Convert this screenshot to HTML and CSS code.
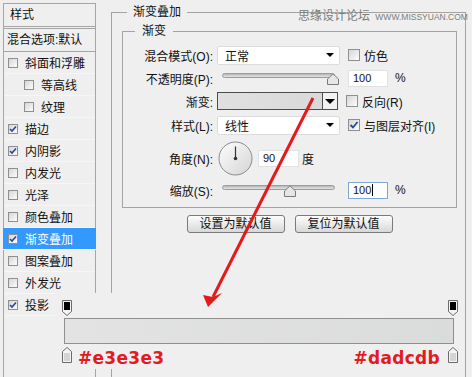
FILE: index.html
```html
<!DOCTYPE html>
<html lang="zh-CN">
<head>
    <meta charset="UTF-8">
    <title>渐变叠加</title>
    <link rel="stylesheet" href="styles.css">
</head>
<body>

<div class="dialog">
    <div class="sidebar">
        <div class="side-head">样式</div>
        <div class="side-blend">混合选项:默认</div>
        <ul class="fx-list">
            <li><span class="cb"></span>斜面和浮雕</li>
            <li class="sub"><span class="cb"></span>等高线</li>
            <li class="sub"><span class="cb"></span>纹理</li>
            <li><span class="cb"><svg width="8" height="8" viewBox="0 0 8 8"><path d="M1 4 L3 6 L7 1.5" fill="none" stroke="#27469c" stroke-width="1.6"/></svg></span>描边</li>
            <li><span class="cb"><svg width="8" height="8" viewBox="0 0 8 8"><path d="M1 4 L3 6 L7 1.5" fill="none" stroke="#27469c" stroke-width="1.6"/></svg></span>内阴影</li>
            <li><span class="cb"></span>内发光</li>
            <li><span class="cb"></span>光泽</li>
            <li><span class="cb"></span>颜色叠加</li>
            <li class="active"><span class="cb"><svg width="8" height="8" viewBox="0 0 8 8"><path d="M1 4 L3 6 L7 1.5" fill="none" stroke="#27469c" stroke-width="1.6"/></svg></span>渐变叠加</li>
            <li><span class="cb"></span>图案叠加</li>
            <li><span class="cb"></span>外发光</li>
            <li><span class="cb"><svg width="8" height="8" viewBox="0 0 8 8"><path d="M1 4 L3 6 L7 1.5" fill="none" stroke="#27469c" stroke-width="1.6"/></svg></span>投影</li>
        </ul>
    </div>

    <fieldset class="group outer">
        <legend>渐变叠加</legend>
        <fieldset class="group inner">
            <legend>渐变</legend>

            <div class="row">
                <label class="lbl">混合模式(O):</label>
                <div class="select"><span>正常</span><i class="tri"></i></div>
                <div class="extra"><span class="cb big"></span>仿色</div>
            </div>

            <div class="row">
                <label class="lbl">不透明度(P):</label>
                <div class="slider">
                    <div class="track"></div>
                    <svg class="thumb" style="left: 110px" width="12" height="12" viewBox="0 0 12 12"><path d="M0.5 11.5V6L6 0.8L11.5 6V11.5Z" fill="#e6e6e6" stroke="#7a7a7a"/></svg>
                </div>
                <div class="extra"><div class="field">100</div><span class="pct">%</span></div>
            </div>

            <div class="row r-grad">
                <label class="lbl">渐变:</label>
                <div class="grad-pick"><div class="grad-fill"></div><div class="grad-btn"><i class="tri"></i></div></div>
                <div class="extra"><span class="cb big"></span>反向(R)</div>
            </div>

            <div class="row r-style">
                <label class="lbl">样式(L):</label>
                <div class="select"><span>线性</span><i class="tri"></i></div>
                <div class="extra"><span class="cb big"><svg width="10" height="10" viewBox="0 0 10 10"><path d="M1.5 5 L4 7.5 L8.5 2" fill="none" stroke="#27469c" stroke-width="1.8"/></svg></span>与图层对齐(I)</div>
            </div>

            <div class="row r-angle">
                <label class="lbl">角度(N):</label>
                <div class="angle">
                    <svg width="35" height="35" viewBox="0 0 35 35">
                        <defs>
                            <linearGradient id="dial" x1="0" y1="0" x2="1" y2="1">
                                <stop offset="0" stop-color="#fefefe"/>
                                <stop offset="1" stop-color="#d4d4d4"/>
                            </linearGradient>
                        </defs>
                        <circle cx="17.5" cy="17.5" r="16.5" fill="url(#dial)" stroke="#8a8a8a"/>
                        <line x1="17.5" y1="17.5" x2="17.5" y2="5.5" stroke="#333" stroke-width="1.2"/>
                        <circle cx="17.5" cy="17.5" r="1.8" fill="#333"/>
                    </svg>
                    <div class="field deg">90</div>
                    <span class="unit">度</span>
                </div>
            </div>

            <div class="row">
                <label class="lbl">缩放(S):</label>
                <div class="slider">
                    <div class="track"></div>
                    <svg class="thumb" style="left: 67px" width="12" height="12" viewBox="0 0 12 12"><path d="M0.5 11.5V6L6 0.8L11.5 6V11.5Z" fill="#e6e6e6" stroke="#7a7a7a"/></svg>
                </div>
                <div class="extra"><div class="field focus">100<span class="caret"></span></div><span class="pct">%</span></div>
            </div>
        </fieldset>

        <div class="buttons">
            <button class="btn">设置为默认值</button>
            <button class="btn">复位为默认值</button>
        </div>
    </fieldset>
</div>

<div class="watermark">思缘设计论坛 <span>WWW.MISSYUAN.COM</span></div>

<!-- 渐变条和色标 -->
<div class="grad-editor">
    <div class="stops">
        <svg width="10" height="16" viewBox="0 0 10 16"><path d="M0.5 0.5H9.5V11.5L5 15.5L0.5 11.5Z" fill="#f4f4f4" stroke="#6a6a6a"/><rect x="2" y="2" width="6" height="8" fill="#000"/></svg>
        <svg width="10" height="16" viewBox="0 0 10 16"><path d="M0.5 0.5H9.5V11.5L5 15.5L0.5 11.5Z" fill="#f4f4f4" stroke="#6a6a6a"/><rect x="2" y="2" width="6" height="8" fill="#000"/></svg>
    </div>
    <div class="bar"></div>
    <div class="stops bottom">
        <svg width="10" height="16" viewBox="0 0 10 16"><path d="M0.5 15.5H9.5V4.5L5 0.5L0.5 4.5Z" fill="#f4f4f4" stroke="#6a6a6a"/><rect x="2" y="6" width="6" height="8" fill="#d4d4d4"/></svg>
        <span class="hex left">#e3e3e3</span>
        <span class="hex right">#dadcdb</span>
        <svg width="10" height="16" viewBox="0 0 10 16"><path d="M0.5 15.5H9.5V4.5L5 0.5L0.5 4.5Z" fill="#f4f4f4" stroke="#6a6a6a"/><rect x="2" y="6" width="6" height="8" fill="#d4d4d4"/></svg>
    </div>
</div>

<svg class="arrow" width="472" height="377" viewBox="0 0 472 377">
    <line x1="313" y1="98" x2="213" y2="297" stroke="#e41b1d" stroke-width="3"/>
    <polygon points="208,307 203,295 213,297 222,293" fill="#e41b1d"/>
</svg>

</body>
</html>
```

FILE: styles.css
```css
* {
    box-sizing: border-box;
}
body {
    margin: 0;
    width: 472px;
    height: 377px;
    overflow: hidden;
    position: relative;
    background-color: #efefef;
    font-family: "Liberation Sans", "Noto Sans CJK SC", sans-serif;
    font-size: 12px;
    color: #111;
}
.dialog {
    display: flex;
    align-items: flex-start;
    padding: 3px 0 0 3px;
}

/* 左侧样式列表 */
.sidebar {
    width: 93px;
    height: 380px;
    border-left: 1px solid #a5a5a5;
    border-right: 1px solid #a5a5a5;
}
.side-head {
    height: 24px;
    line-height: 22px;
    padding-left: 6px;
    border-top: 1px solid #a5a5a5;
    border-bottom: 1px solid #a5a5a5;
}
.side-blend {
    margin-top: 1px;
    height: 24px;
    line-height: 22px;
    padding-left: 3px;
    border-top: 1px solid #a5a5a5;
    border-bottom: 1px solid #a5a5a5;
}
.fx-list {
    list-style: none;
    margin: 0;
    padding: 0;
}
.fx-list li {
    display: flex;
    align-items: center;
    gap: 7px;
    height: 22px;
    padding-left: 4px;
    border-bottom: 1px solid #f6f6f6;
}
.fx-list li.sub {
    padding-left: 20px;
}
.fx-list li.active {
    margin: 0 -1px;
    padding-left: 5px;
    background-color: #3399ff;
    color: #fff;
}

/* 复选框 */
.cb {
    display: inline-flex;
    align-items: center;
    justify-content: center;
    flex: none;
    width: 10px;
    height: 10px;
    border: 1px solid #8f8f8f;
    background: linear-gradient(135deg, #d6d6d6, #fdfdfd);
}
.cb.big {
    width: 12px;
    height: 12px;
}

/* 分组框 */
.group {
    margin: 0;
    border: 1px solid #a3a3a3;
    min-inline-size: 0;
}
.group legend {
    line-height: 16px;
}
.outer {
    margin: 1px 0 0 15px;
    width: 355px;
    height: 390px;
    padding: 3px 8px 0 10px;
}
.outer > legend {
    margin-left: 5px;
    padding: 0 6px;
}
.inner {
    width: 100%;
    padding: 6px 0 7px 0;
}
.inner > legend {
    margin-left: 12px;
    padding: 0 7px;
}

.row {
    display: flex;
    align-items: center;
    height: 20px;
    margin-bottom: 3px;
}
.row.r-grad {
    margin-bottom: 4px;
}
.row.r-style {
    margin-bottom: 6px;
}
.row.r-angle {
    height: 34px;
    margin-bottom: 5px;
}
.row:last-child {
    margin-bottom: 0;
}
.lbl {
    width: 90px;
    text-align: right;
    white-space: nowrap;
}
.select {
    margin-left: 4px;
    width: 123px;
    height: 19px;
    display: flex;
    align-items: center;
    justify-content: space-between;
    padding: 0 5px 0 7px;
    background-color: #fff;
    border: 1px solid #dcdcdc;
    border-radius: 2px;
}
.tri {
    width: 0;
    height: 0;
    border-left: 4px solid transparent;
    border-right: 4px solid transparent;
    border-top: 4px solid #000;
}
.extra {
    margin-left: 8px;
    display: flex;
    align-items: center;
    gap: 4px;
    white-space: nowrap;
}

/* 滑块 */
.slider {
    position: relative;
    margin-left: 4px;
    width: 123px;
    height: 20px;
}
.track {
    margin: 5px 0 0 5px;
    width: 113px;
    height: 5px;
    border: 1px solid #9c9c9c;
    border-radius: 3px;
    background: linear-gradient(#b5b5b5, #e6e6e6);
}
.thumb {
    position: absolute;
    top: 5px;
}

.field {
    width: 40px;
    height: 17px;
    line-height: 15px;
    padding-left: 4px;
    background-color: #fff;
    border: 1px solid #e2e2e2;
    font-size: 11px;
}
.field.focus {
    border-color: #7ea6d6;
}
.caret {
    display: inline-block;
    width: 1px;
    height: 12px;
    margin-left: 1px;
    vertical-align: -2px;
    background-color: #000;
}
.pct {
    margin-left: 3px;
}

/* 渐变拾取器 */
.grad-pick {
    margin-left: 4px;
    width: 121px;
    height: 18px;
    display: flex;
    border: 1px solid #4d4d4d;
}
.grad-fill {
    flex: 1;
    background: linear-gradient(to right, #e0e0e0, #d9d9d9);
    border-right: 1px solid #4d4d4d;
}
.grad-btn {
    width: 14px;
    display: flex;
    align-items: center;
    justify-content: center;
    background-color: #f2f2f2;
}
.grad-btn .tri {
    border-left-width: 5px;
    border-right-width: 5px;
    border-top-width: 5px;
}

.angle {
    margin-left: 5px;
    display: flex;
    align-items: center;
}
.angle svg {
    display: block;
}
.field.deg {
    margin-left: 5px;
    width: 41px;
}
.unit {
    margin-left: 3px;
}

.buttons {
    margin-top: 7px;
    display: flex;
    justify-content: center;
    gap: 10px;
}
.btn {
    width: 98px;
    height: 18px;
    padding: 0;
    font: inherit;
    line-height: 16px;
    color: #111;
    border: 1px solid #7a7a7a;
    border-radius: 3px;
    background: linear-gradient(#fdfdfd, #d8d8d8);
}

.watermark {
    position: absolute;
    top: 10px;
    left: 298px;
    line-height: 13px;
    color: #7c7c7c;
    white-space: nowrap;
}
.watermark span {
    font-size: 8.5px;
    margin-left: 2px;
}

/* 渐变编辑条 */
.grad-editor {
    position: absolute;
    left: 55px;
    top: 293px;
    width: 408px;
    height: 76px;
    padding-top: 7px;
    background-color: #efefef;
}
.stops {
    display: flex;
    justify-content: space-between;
    margin-left: 7px;
    width: 396px;
    height: 16px;
}
.stops svg {
    display: block;
    flex: none;
}
.bar {
    margin: 2px 0 0 9px;
    width: 390px;
    height: 26px;
    border: 1px solid #8f8f8f;
    background: linear-gradient(to right, #e3e3e3, #dadcdb);
}
.stops.bottom {
    margin-top: 3px;
    justify-content: flex-start;
}
.hex {
    margin-top: 1px;
    line-height: 20px;
    font-family: "DejaVu Sans", sans-serif;
    font-weight: bold;
    font-size: 17px;
    letter-spacing: 0.3px;
    color: #e41b1d;
}
.hex.left {
    margin-left: 6px;
}
.hex.right {
    margin-left: auto;
    margin-right: 8px;
}

.arrow {
    position: absolute;
    top: 0;
    left: 0;
    pointer-events: none;
}
```
